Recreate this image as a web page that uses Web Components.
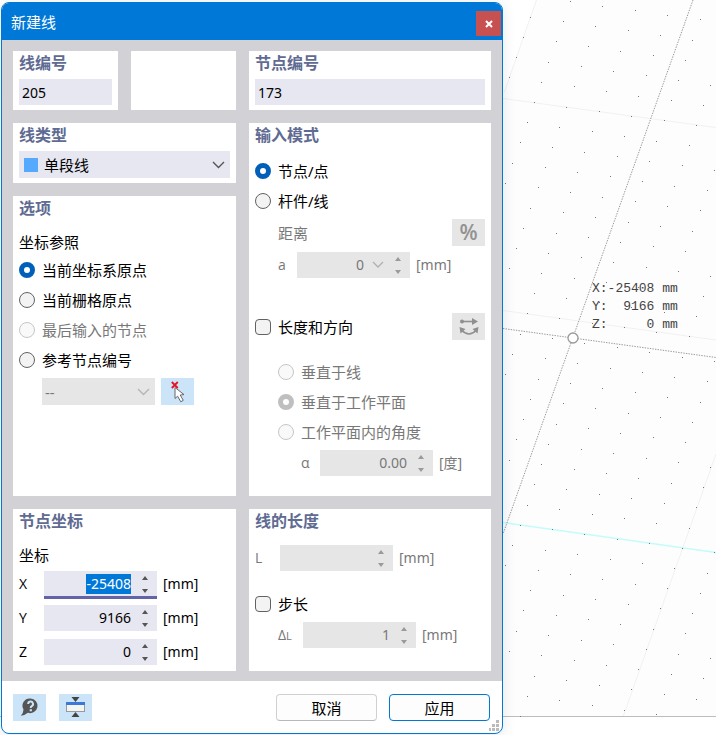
<!DOCTYPE html>
<html lang="zh-CN">
<head>
<meta charset="utf-8">
<title>新建线</title>
<style>
  html, body { margin: 0; }
  body {
    min-height: 100vh;
    background: #fff;
    font: 15px/20px "Noto Sans", "Noto Sans CJK SC", sans-serif;
    color: #000;
  }
</style>
</head>
<body>
<cad-app></cad-app>

<script>
const define = (name, html, setup) => {
  const tpl = document.createElement('template');
  tpl.innerHTML = html;
  customElements.define(name, class extends HTMLElement {
    constructor() {
      super();
      this.attachShadow({ mode: 'open' }).append(tpl.content.cloneNode(true));
    }
    connectedCallback() {
      if (setup && !this.ready) { this.ready = true; setup(this, this.shadowRoot); }
    }
  });
};

/* Work plane with grid points, axes and cursor read-out */
define('work-plane', `
<style>
  :host { display: block; overflow: hidden; }
  svg { display: block; width: 100%; height: 100%; }
  text { font: 13px "Liberation Mono", monospace; fill: #444; white-space: pre; }
</style>
<svg preserveAspectRatio="xMinYMin slice" aria-label="工作平面">
  <path d="M536 0H4000V717H0V98H504V93Z" fill="#fdfdfd"/>
  <g fill="none" stroke="#f1f1f1">
    <path d="M536.5 0L504 93M503 98.5L716 127.5M503 310.5L716 340M716 454L623 717"/>
    <path d="M503 522.5L716 552.5" stroke="#c4fbfb" stroke-width="1.4"/>
    <path d="M0 716.5H4000" stroke="#bdbdbd"/>
  </g>
  <g fill="none" stroke="#999" stroke-dasharray="1.4 1.2">
    <path d="M693 0L503 534M503 328.5L573 338L716 357.5"/>
  </g>
  <g id="dots" fill="#777"></g>
  <circle cx="573" cy="338" r="5" fill="#fff" stroke="#999" stroke-width="1.3"/>
  <text x="592" y="292">X:-25408 mm</text>
  <text x="592" y="310">Y:  9166 mm</text>
  <text x="592" y="328">Z:     0 mm</text>
</svg>`, (el, root) => {
  let s = '';
  for (let j = -8; j < 34; j++) for (let i = -4; i < 20; i++) {
    const x = Math.round(534 + 32.4 * i - 7.2 * j), y = Math.round(102 + 4.6 * i + 20.22 * j);
    const outside = y < 97 && x < 536 - y * 0.35 - 3;
    if (x < 503 || x > 716 || y < 0 || y > 717 || outside) continue;
    s += `<rect x="${x}" y="${y}" width="1" height="1"/>`;
  }
  root.getElementById('dots').innerHTML = s;
});

/* White titled section */
define('group-panel', `
<style>
  :host { display: flex; flex-direction: column; background: #fff; padding: 2px 6px 5px; box-sizing: border-box; min-width: 0; }
  h2 { margin: 0; font-size: 16px; line-height: 20px; font-weight: 700; color: #5f6b92; }
  h2:empty { display: none; }
</style>
<h2></h2><slot></slot>`, (el, root) => {
  root.querySelector('h2').textContent = el.getAttribute('heading') || '';
});

/* Radio button or tick box with its label */
define('choice-item', `
<style>
  :host { display: flex; align-items: center; height: 30px; }
  label { display: flex; align-items: center; gap: 7px; white-space: nowrap; }
  input {
    appearance: none; box-sizing: border-box; flex: none; margin: 0; width: 16px; height: 16px;
    border: 1px solid #626262; background: #f3f3f3; border-radius: 4px;
  }
  input[type=radio] { border-radius: 50%; }
  input[type=radio]:checked { border: 5px solid #005fb8; background: #fff; }
  input[type=checkbox]:checked { background: #005fb8; }
  input:disabled { border-color: #c6c6c6; background: #f9f9f9; }
  input[type=radio]:disabled:checked { border-color: #bfbfbf; }
  input:disabled + span { color: #787878; }
</style>
<label><input><span><slot></slot></span></label>`, (el, root) => {
  const input = root.querySelector('input');
  input.type = el.getAttribute('type') || 'radio';
  input.name = el.getAttribute('name') || '';
  input.checked = el.hasAttribute('checked');
  input.disabled = el.hasAttribute('disabled');
  input.addEventListener('change', () => {
    if (input.type !== 'radio') return;
    el.getRootNode().querySelectorAll(`choice-item[name="${input.name}"]`).forEach(o => {
      if (o !== el) o.shadowRoot.querySelector('input').checked = false;
    });
  });
});

/* Plain number box */
define('text-box', `
<style>
  :host { display: block; margin-top: 6px; }
  input {
    display: block; box-sizing: border-box; width: 100%; height: 26px; border: 0; padding: 0 3px;
    background: #e7e7f1; font: inherit; font-size: 14px; color: #000; outline: 0;
  }
</style>
<input type="text">`, (el, root) => {
  const i = root.querySelector('input');
  i.value = el.getAttribute('value');
  i.setAttribute('aria-label', el.getAttribute('label'));
});

/* Label, value with spin buttons, unit */
define('number-field', `
<style>
  :host { display: flex; align-items: center; height: 26px; font-size: 14px; }
  label { width: var(--label-width, 25px); flex: none; white-space: nowrap; font-family: "Open Sans", "Noto Sans", sans-serif; }
  small { font-size: 11px; }
  .box { position: relative; display: flex; width: 113px; height: 26px; background: #e7e7f1; }
  input {
    flex: 1; min-width: 0; border: 0; padding: 0; background: none; outline: 0;
    font: inherit; line-height: 20px; text-align: right; color: #000;
  }
  input::selection { background: #0078d7; color: #fff; }
  .spin { display: flex; flex-direction: column; width: 26px; height: 26px; }
  button { border: 0; padding: 0; background: none; flex: 1; display: grid; place-items: center; color: #555; }
  .spin button { padding-left: 2px; }
  .drop { flex: 0 0 22px; display: none; }
  :host([combo]) .drop { display: grid; padding-left: 6px; }
  :host([combo]) .spin { width: 24px; }
  :host([combo]) .spin button { padding-left: 0; }
  svg { display: block; }
  .unit { margin-left: 6px; white-space: nowrap; }
  :host([disabled]) { color: #787878; }
  :host([disabled]) .box { background: #e6e6e6; }
  :host([disabled]) input { color: #787878; }
  :host([disabled]) button { color: #9a9a9a; }
  :host([active]) .box::after { content: ""; position: absolute; inset: auto 0 -2px 0; height: 3px; background: #6264a7; }
</style>
<label for="v"></label>
<div class="box">
  <input id="v" type="text">
  <button class="drop" aria-label="列表"><svg width="12" height="8" viewBox="0 0 12 8"><path d="M1 1l5 5 5-5" fill="none" stroke="#b0b0b0" stroke-width="1.3"/></svg></button>
  <div class="spin">
    <button aria-label="增加"><svg width="6" height="4" viewBox="0 0 6 4"><path d="M3 0L6 4H0Z" fill="currentColor"/></svg></button>
    <button aria-label="减少"><svg width="6" height="4" viewBox="0 0 6 4"><path d="M3 4L6 0H0Z" fill="currentColor"/></svg></button>
  </div>
</div>
<span class="unit"></span>`, (el, root) => {
  const input = root.querySelector('input');
  const sub = el.getAttribute('sub');
  root.querySelector('label').innerHTML = el.getAttribute('label') + (sub ? `<small>${sub}</small>` : '');
  root.querySelector('.unit').textContent = el.getAttribute('unit');
  input.value = el.getAttribute('value') || '';
  if (el.hasAttribute('disabled')) root.querySelectorAll('input, button').forEach(n => n.disabled = true);
  const step = d => { input.value = (parseFloat(input.value) || 0) + d; };
  const [up, down] = root.querySelectorAll('.spin button');
  up.onclick = () => step(1);
  down.onclick = () => step(-1);
  if (el.hasAttribute('active')) { input.focus(); input.select(); }
});

/* Drop-down */
define('drop-down', `
<style>
  :host { display: grid; height: 27px; background: #e7e7f1; }
  select, i, svg { grid-area: 1 / 1; }
  select {
    appearance: none; border: 0; margin: 0; padding: 0 28px 0 3px; width: 100%; height: 27px;
    background: none; font: inherit; color: #000; outline: 0; opacity: 1;
  }
  i { display: none; width: 14px; height: 14px; margin-left: 5px; align-self: center; background: #55aaff; }
  :host([swatch]) i { display: block; }
  :host([swatch]) select { padding-left: 25px; }
  svg { justify-self: end; align-self: center; margin-right: 5px; pointer-events: none; color: #555; }
  :host([disabled]) { background: #e6e6e6; }
  :host([disabled]) select { color: #787878; }
  :host([disabled]) svg { color: #b5b5b5; }
</style>
<i></i><select><option></option></select>
<svg width="13" height="8" viewBox="0 0 13 8"><path d="M1 1l5.500 5.500L12 1" fill="none" stroke="currentColor" stroke-width="1.4"/></svg>`, (el, root) => {
  const s = root.querySelector('select');
  s.options[0].textContent = el.getAttribute('value');
  s.setAttribute('aria-label', el.getAttribute('label'));
  s.disabled = el.hasAttribute('disabled');
});

/* Small square tool button */
define('tool-button', `
<style>
  :host { display: block; flex: none; width: 33px; height: 27px; }
  button {
    width: 100%; height: 100%; border: 0; padding: 0; background: #cce4f7; display: grid; place-items: center;
    font: 600 21px/27px "Open Sans", sans-serif; color: #555;
  }
  button:disabled { background: #e6e6e6; color: #929292; }
  ::slotted(svg) { display: block; }
</style>
<button><slot></slot></button>`, (el, root) => {
  const b = root.querySelector('button');
  b.disabled = el.hasAttribute('disabled');
  b.setAttribute('aria-label', el.getAttribute('label'));
});

/* Footer command */
define('push-button', `
<style>
  :host { display: block; width: 101px; }
  button {
    width: 100%; height: 27px; border: 1px solid #d0d0d0; border-bottom-color: #b8b8b8; border-radius: 4px;
    background: #fdfdfd; font: inherit; color: #000; padding: 0;
  }
  :host([primary]) button { border-color: #0078d4; }
</style>
<button><slot></slot></button>`);

/* Framed window with title bar, body and footer */
define('dialog-window', `
<style>
  :host {
    display: block; position: relative; background: #fff; border: 1px solid #0078d7; border-radius: 8px;
    overflow: hidden; box-shadow: 0 2px 14px rgba(0, 0, 0, .1);
  }
  header { display: flex; align-items: flex-end; justify-content: space-between; background: #0078d7; color: #fff; height: 37px; padding: 0 1px 0 9px; box-sizing: border-box; }
  h1 { margin: 0; font-size: 15px; line-height: 20px; font-weight: 400; align-self: center; }
  header button { width: 25px; height: 25px; margin-bottom: 4px; border: 0; padding: 0; background: #c75050; display: grid; place-items: center; }
  main { background: #d1d1d6; padding: 11px 11px 10px; }
  footer { display: flex; gap: 13px; padding: 13px 12px 12px 11px; }
  .grip { position: absolute; right: 3px; bottom: 2px; }
</style>
<header><h1></h1><button aria-label="关闭"><svg width="8" height="8" viewBox="0 0 8 8"><path d="M1 1l6 6M7 1L1 7" stroke="#fff" stroke-width="2"/></svg></button></header>
<main><slot></slot></main>
<footer><slot name="footer"></slot></footer>
<svg class="grip" width="10" height="11" viewBox="0 0 10 11" fill="#bbb"><path d="M7 0h3v3H7zM3 4h3v3H3zM7 4h3v3H7zM0 8h2v3H0zM3 8h3v3H3zM7 8h3v3H7z"/></svg>`, (el, root) => {
  root.querySelector('h1').textContent = el.getAttribute('heading');
});

define('cad-app', `
<style>
  :host { display: grid; grid-template-columns: minmax(0, 503fr) minmax(0, 213fr); min-height: 100vh; }
  work-plane { grid-area: 1 / 1 / 2 / 3; }
  dialog-window { grid-area: 1 / 1; align-self: start; margin: 2px 0 1px 1px; }
  .panels { display: grid; grid-template-columns: 105fr 105fr 242fr; grid-template-rows: auto auto 1fr auto; gap: 13px; }
  .wide { grid-column: 1 / 3; }
  .mode { grid-area: 2 / 3 / 4 / 4; padding-bottom: 20px; }
  .caption { height: 26px; line-height: 26px; margin-top: 11px; }
  .first { margin-top: 11px; }
  .row { display: flex; align-items: center; justify-content: space-between; }
  .pick { justify-content: flex-start; gap: 6px; margin: 3px 0 0 23px; }
  .pick drop-down { width: 113px; }
  .distance { margin: 3px 0 6px; padding-left: 23px; color: #787878; }
  .nested { margin-left: 23px; }
  .narrow { --label-width: 19px; }
  .direction { height: 27px; margin: 35px 0 17px; }
  .angle { margin: 3px 0 0 46px; }
  .coords { display: grid; gap: 8px; margin: 3px 0 1px; }
  .length { margin-top: 14px; }
  .step { margin: 18px 0 3px; }
  .type { margin-top: 6px; }
  .actions { display: flex; gap: 12px; margin-left: auto; }
</style>
<work-plane></work-plane>
<dialog-window heading="新建线">
  <div class="panels">
    <group-panel heading="线编号"><text-box label="线编号" value="205"></text-box></group-panel>
    <group-panel></group-panel>
    <group-panel heading="节点编号"><text-box label="节点编号" value="173"></text-box></group-panel>

    <group-panel class="wide" heading="线类型"><drop-down class="type" swatch label="线类型" value="单段线"></drop-down></group-panel>

    <group-panel class="mode" heading="输入模式">
      <choice-item class="first" name="mode" checked>节点/点</choice-item>
      <choice-item name="mode">杆件/线</choice-item>
      <div class="row distance"><span>距离</span><tool-button disabled label="百分比">%</tool-button></div>
      <number-field class="nested narrow" combo disabled label="a" value="0" unit="[mm]"></number-field>
      <div class="row direction">
        <choice-item type="checkbox">长度和方向</choice-item>
        <tool-button disabled label="反转方向"><svg width="20" height="18" viewBox="0 0 20 18" fill="none" stroke="#8f8f8f" stroke-width="1.6"><circle cx="3" cy="3.500" r="2" fill="#8f8f8f" stroke="none"/><path d="M4 3.500H14"/><path d="M13 0L19 3.500L13 7Z" fill="#8f8f8f" stroke="none"/><path d="M3 12.500Q10 19.500 17 12.500"/><path d="M.5 9L6.500 11L1.500 15.500ZM19.500 9L13.500 11L18.500 15.500Z" fill="#8f8f8f" stroke="none"/></svg></tool-button>
      </div>
      <choice-item class="nested" name="dir" disabled>垂直于线</choice-item>
      <choice-item class="nested" name="dir" disabled checked>垂直于工作平面</choice-item>
      <choice-item class="nested" name="dir" disabled>工作平面内的角度</choice-item>
      <number-field class="angle narrow" disabled label="α" value="0.00" unit="[度]"></number-field>
    </group-panel>

    <group-panel class="wide" heading="选项">
      <div class="caption">坐标参照</div>
      <choice-item name="ref" checked>当前坐标系原点</choice-item>
      <choice-item name="ref">当前栅格原点</choice-item>
      <choice-item name="ref" disabled>最后输入的节点</choice-item>
      <choice-item name="ref">参考节点编号</choice-item>
      <div class="row pick">
        <drop-down disabled label="参考节点编号" value="--"></drop-down>
        <tool-button label="选择节点"><svg width="14" height="22" viewBox="0 0 14 22"><path d="M.8 1l6 6M6.800 1L.8 7" stroke="#e81123" stroke-width="1.8"/><path d="M4 6.500V17.500L6.600 15.200L9.800 20.800L12.300 19.300L9.200 14L13 13.600Z" fill="#fff" stroke="#666" stroke-width="1"/></svg></tool-button>
      </div>
    </group-panel>

    <group-panel class="wide" heading="节点坐标">
      <div class="caption">坐标</div>
      <div class="coords">
        <number-field active label="X" value="-25408" unit="[mm]"></number-field>
        <number-field label="Y" value="9166" unit="[mm]"></number-field>
        <number-field label="Z" value="0" unit="[mm]"></number-field>
      </div>
    </group-panel>

    <group-panel heading="线的长度">
      <number-field class="length" disabled label="L" unit="[mm]"></number-field>
      <choice-item class="step" type="checkbox">步长</choice-item>
      <number-field class="nested" disabled label="Δ" sub="L" value="1" unit="[mm]"></number-field>
    </group-panel>
  </div>

  <tool-button slot="footer" label="帮助"><svg width="19" height="21" viewBox="0 0 19 21"><path d="M10.500 1.500a7.300 7.300 0 1 1-2.600 14.200Q4.500 18.500 .8 18.800Q3.500 16 3.500 12.500A7.300 7.300 0 0 1 10.500 1.500Z" fill="#555"/><path d="M8.200 7a2.400 2.400 0 1 1 3.500 2.100q-1 .5-1 1.900" fill="none" stroke="#cce4f7" stroke-width="2"/><rect x="9.700" y="12.200" width="2.200" height="2.100" fill="#cce4f7"/></svg></tool-button>
  <tool-button slot="footer" label="折叠"><svg width="19" height="21" viewBox="0 0 19 21"><path d="M5.500 0H13.500L9.500 5ZM5.500 20H13.500L9.500 15Z" fill="#444"/><rect x=".5" y="5.500" width="18" height="9" fill="#f4f4f4" stroke="#999"/><rect x="0" y="5" width="19" height="3" fill="#3a78dc"/></svg></tool-button>
  <div slot="footer" class="actions">
    <push-button>取消</push-button>
    <push-button primary>应用</push-button>
  </div>
</dialog-window>`);
</script>
</body>
</html>
